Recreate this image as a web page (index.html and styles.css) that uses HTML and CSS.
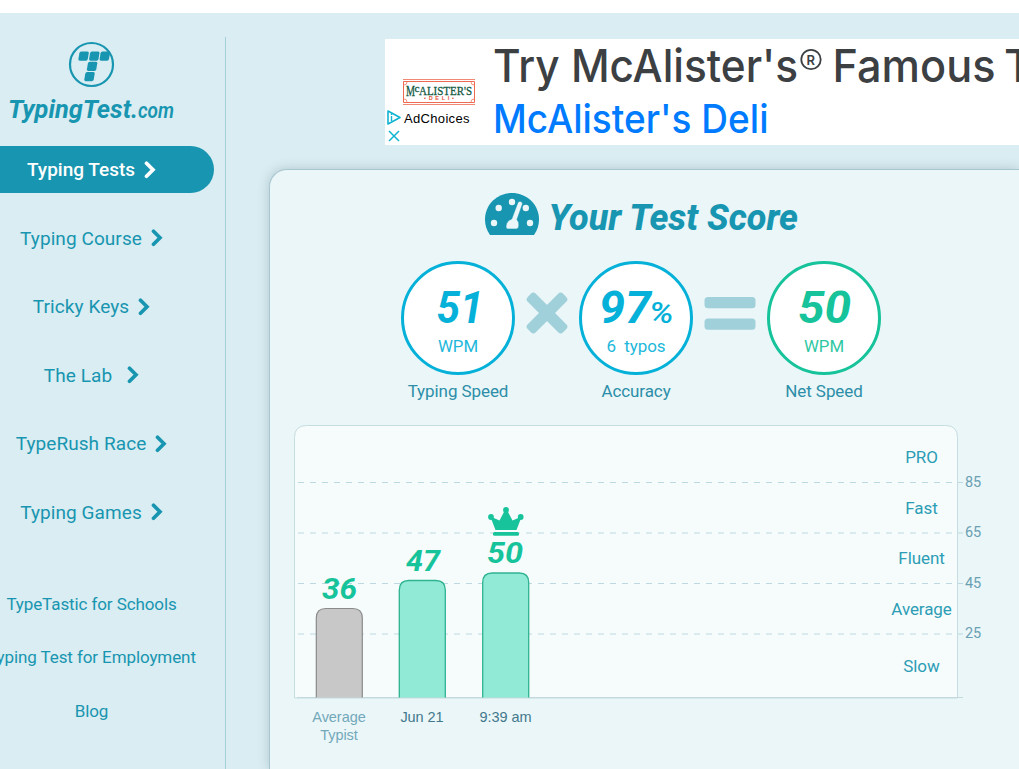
FILE: index.html
```
<!DOCTYPE html>
<html lang="en">
<head>
<meta charset="utf-8">
<title>TypingTest.com</title>
<link rel="stylesheet" href="styles.css">
</head>
<body>
<svg class="defs" width="0" height="0" aria-hidden="true">
  <symbol id="chevron" viewBox="0 0 12 18"><path d="M2.500 2.300 9 8.800l-6.500 6.500" fill="none" stroke="currentColor" stroke-width="3.700" stroke-linecap="round"/></symbol>
</svg>
<div class="page">
  <aside class="sidebar">
    <a class="brand">
      <svg width="183" height="100" viewBox="0 37 183 100">
        <circle cx="91.500" cy="64.500" r="21.500" fill="none" stroke="#1895b0" stroke-width="2.200"/>
        <g fill="#1895b0">
          <path id="key" d="M81.300 51.500h6.200q1.500 0 1.300 1.500l-1 6q-.3 1.700-2 1.700h-6q-1.600 0-1.400-1.700l1-5.800q.3-1.700 1.900-1.700z"/>
          <use href="#key" x="10.700"/><use href="#key" x="21.200"/><use href="#key" x="8.500" y="10.300"/><use href="#key" x="5.900" y="20.600"/>
        </g>
        <text class="brand-name" x="8" y="118" textLength="123" lengthAdjust="spacingAndGlyphs">TypingTest</text>
        <text class="brand-name" x="131" y="118">.</text>
        <text class="brand-tld" x="138" y="118" textLength="36" lengthAdjust="spacingAndGlyphs">com</text>
      </svg>
    </a>
    <nav class="nav">
      <a class="active">Typing Tests<svg><use href="#chevron"/></svg></a>
      <a>Typing Course<svg><use href="#chevron"/></svg></a>
      <a>Tricky Keys<svg><use href="#chevron"/></svg></a>
      <a class="wide">The Lab<svg><use href="#chevron"/></svg></a>
      <a>TypeRush Race<svg><use href="#chevron"/></svg></a>
      <a>Typing Games<svg><use href="#chevron"/></svg></a>
    </nav>
    <div class="links"><a>TypeTastic for Schools</a><a>Typing Test for Employment</a><a>Blog</a></div>
  </aside>
  <main class="main">
    <section class="ad">
      <svg width="634" height="106" viewBox="385 39 634 106">
        <g fill="none" stroke="#ee6a50">
          <path d="M403 79.500h72M403 104.500h72" stroke-width=".8"/>
          <path d="M403.500 81.500h71v21h-71z"/>
          <path d="M407 82q0 3-3 3M471 82q0 3 3 3M407 102q0-3-3-3M471 102q0-3 3-3" stroke-width=".7"/>
        </g>
        <g class="deli">
          <text x="406" y="96" font-size="14" textLength="9" lengthAdjust="spacingAndGlyphs">M</text>
          <text x="414.500" y="92" font-size="11" textLength="5" lengthAdjust="spacingAndGlyphs">c</text>
          <text x="419" y="94.500" font-size="13" textLength="53" lengthAdjust="spacingAndGlyphs">ALISTER'S</text>
        </g>
        <text class="deli-sub" x="424" y="99.500" textLength="30">•DELI•</text>
        <path d="M388 111l12 6.500-12 6.500z" fill="none" stroke="#10b4d2" stroke-width="1.600" stroke-linejoin="round"/>
        <path d="M391.500 113.500v1.500M391.500 116v5" stroke="#10b4d2" stroke-width="1.400"/>
        <path d="M389 131l10 10M399 131l-10 10" stroke="#10b4d2" stroke-width="1.500"/>
        <text class="choices" x="404" y="122.500" textLength="65.500">AdChoices</text>
        <text class="ad-title" x="493" y="82" textLength="305" lengthAdjust="spacingAndGlyphs">Try McAlister's</text>
        <circle cx="811" cy="59.500" r="9.700" fill="none" stroke="#3c4043" stroke-width="1.800"/>
        <text class="reg" x="806.500" y="64.500">R</text>
        <text class="ad-title" x="832.500" y="82" textLength="163" lengthAdjust="spacingAndGlyphs">Famous</text>
        <text class="ad-title" x="1004" y="82">T</text>
        <text class="ad-name" x="493" y="133" textLength="275.500" lengthAdjust="spacingAndGlyphs">McAlister's Deli</text>
      </svg>
    </section>
    <section class="panel">
      <h1 class="title">
        <svg width="320" height="50" viewBox="482 190 320 50">
          <path d="M490 235C482 224 484 209 493 200.500C504 190.500 520 190.500 531 200.500C540 209 542 224 534 235Z" fill="#1895b0"/>
          <g fill="#eaf6f8"><circle cx="494" cy="223" r="3.200"/><circle cx="498.700" cy="208" r="3.200"/><circle cx="512" cy="202" r="3.200"/><circle cx="525.800" cy="208" r="3.200"/><circle cx="530" cy="223" r="3.200"/>
          <path d="M517.700 203q.8-2.200 3-1.500t1.700 2.800L517 219.500q2.500 3 1.800 6.500-.3 3-2.500 3h-8.500q-2 0-1.800-2.500.2-5.500 5.700-7.500z" stroke="#1895b0" stroke-width=".6"/></g>
          <text class="title-text" x="548.500" y="229.500" textLength="249.500" lengthAdjust="spacingAndGlyphs">Your Test Score</text>
        </svg>
      </h1>
      <div class="scores">
        <div class="score">
          <div class="ring"><svg viewBox="0 0 114 114"><text class="num" x="35.500" y="62" textLength="47" lengthAdjust="spacingAndGlyphs">51</text><text class="unit" x="57" y="91" textLength="40" lengthAdjust="spacingAndGlyphs">WPM</text></svg></div>
          <span>Typing Speed</span>
        </div>
        <svg class="op times" viewBox="0 0 40 40"><g fill="#a0d0da"><rect x="-5" y="14.300" width="50" height="11.400" rx="3.500" transform="rotate(45 20 20)"/><rect x="-5" y="14.300" width="50" height="11.400" rx="3.500" transform="rotate(-45 20 20)"/></g></svg>
        <div class="score">
          <div class="ring"><svg viewBox="0 0 114 114"><text class="num" x="20" y="62" textLength="52" lengthAdjust="spacingAndGlyphs">97</text><text class="pct" x="70" y="62" textLength="24.500" lengthAdjust="spacingAndGlyphs">%</text><text class="unit" x="57" y="91" textLength="59" lengthAdjust="spacingAndGlyphs" xml:space="preserve">6  typos</text></svg></div>
          <span>Accuracy</span>
        </div>
        <svg class="op equals" viewBox="0 0 52 34"><rect x=".5" width="51" height="11.300" rx="3.500" fill="#a0d0da"/><rect x=".5" y="21.500" width="51" height="11.300" rx="3.500" fill="#a0d0da"/></svg>
        <div class="score">
          <div class="ring net"><svg viewBox="0 0 114 114"><text class="num" x="31" y="62" textLength="53" lengthAdjust="spacingAndGlyphs">50</text><text class="unit" x="57" y="91" textLength="40" lengthAdjust="spacingAndGlyphs">WPM</text></svg></div>
          <span>Net Speed</span>
        </div>
      </div>
      <svg class="chart" width="706" height="330" viewBox="290 420 706 330">
        <path d="M294.500 698V437.500q0-12 12-12h639q12 0 12 12V698z" fill="#f6fcfc" stroke="#c5dce0"/>
        <path d="M298 482.500h665M298 533h665M298 583.500h665M298 634h665" stroke="#bcd9e2" stroke-width="1.200" stroke-dasharray="6 6"/>
        <path d="M297 697.500h666" stroke="#c3d9dd"/>
        <path d="M316.300 697.500V618q0-9.500 9.500-9.500h27q9.500 0 9.500 9.500v79.500" fill="#c8c8c8" stroke="#8a8a8a" stroke-width="1.200"/>
        <path d="M399.300 697.500V590q0-9.500 9.500-9.500h27q9.500 0 9.500 9.500v107.500" fill="#90ead6" stroke="#2fb391" stroke-width="1.300"/>
        <path d="M482.700 697.500V582.500q0-9.500 9.500-9.500h27q9.500 0 9.500 9.500v115" fill="#90ead6" stroke="#2fb391" stroke-width="1.300"/>
        <g class="bar-value">
          <text x="322" y="599" textLength="35" lengthAdjust="spacingAndGlyphs">36</text>
          <text x="406" y="571" textLength="34" lengthAdjust="spacingAndGlyphs">47</text>
          <text x="487" y="563" textLength="36" lengthAdjust="spacingAndGlyphs">50</text>
        </g>
        <g fill="#16c39a"><path d="M490.300 516.500l9.200 4 5-9.500h3l5 9.500 9.200-4-5.200 13.500h-21z"/><circle cx="506" cy="510" r="2.900"/><circle cx="491" cy="517" r="2.900"/><circle cx="520.700" cy="517" r="2.900"/><rect x="493" y="532" width="26" height="3.800" rx="1.500"/></g>
        <g class="x-label">
          <text class="muted" x="339" y="722">Average</text><text class="muted" x="339" y="740">Typist</text>
          <text x="422" y="722">Jun 21</text><text x="505.500" y="722">9:39 am</text>
        </g>
        <g class="level">
          <text x="921.500" y="463">PRO</text><text x="921.500" y="514">Fast</text><text x="921.500" y="564">Fluent</text><text x="921.500" y="615">Average</text><text x="921.500" y="672">Slow</text>
        </g>
        <g class="tick">
          <text x="965" y="487">85</text><text x="965" y="537">65</text><text x="965" y="588">45</text><text x="965" y="638">25</text>
        </g>
      </svg>
    </section>
  </main>
</div>
</body>
</html>
```

FILE: styles.css
```
* { box-sizing: border-box; }
html, body { margin: 0; height: 100%; overflow: hidden; }
body { padding-top: 13px; background: #fff; font-family: Roboto, sans-serif; color: #1895b0; }
svg { display: block; flex: none; }
.defs { position: absolute; }
.page { display: flex; height: 756px; padding-top: 24px; background: #d9edf2; overflow: hidden; }
.sidebar { flex: none; width: 226px; height: 732px; border-right: 1px solid #a3cfda; }
.brand { display: block; height: 109px; }
.brand-name, .brand-tld, .title-text, .num, .pct, .bar-value { font-family: Roboto, sans-serif; font-style: italic; }
.brand-name { font-size: 25px; font-weight: 700; fill: #1895b0; }
.brand-tld { font-size: 22px; font-weight: 600; fill: #1895b0; }
.nav { width: 245px; margin-left: -31px; display: flex; flex-direction: column; gap: 21.5px; }
.nav a { height: 47px; display: flex; align-items: center; justify-content: center; gap: 9px; font-size: 19px; letter-spacing: .08px; border-radius: 0 24px 24px 0; white-space: nowrap; }
.nav a.active { background: #1895b0; color: #fff; font-weight: 500; letter-spacing: 0; }
.nav a.wide { gap: 15px; }
.nav svg { width: 12px; height: 18px; }
.links { width: 245px; margin: 53.500px 0 0 -31px; display: flex; flex-direction: column; align-items: center; gap: 23.3px; font-size: 17px; }
.links a { height: 30px; line-height: 30px; white-space: nowrap; letter-spacing: -.1px; }
.main { flex: none; width: 793px; padding: 2px 0 0 43px; }
.ad { width: 634px; height: 106px; margin-left: 116px; background: #fff; overflow: hidden; }
.deli { font-family: "Liberation Serif", serif; font-weight: 400; fill: #12583f; stroke: #12583f; stroke-width: .3px; }
.deli-sub { font: 700 5.500px "Liberation Sans", sans-serif; fill: #e5523a; }
.choices { font: 13px "Liberation Sans", sans-serif; fill: #000; }
.ad-title { font: 500 45px Inter, sans-serif; fill: #3c4043; }
.ad-name { font: 500 39px Inter, sans-serif; fill: #007bff; }
.reg { font: 600 13px Inter, sans-serif; fill: #3c4043; }
.panel { width: 750px; height: 600px; margin-top: 24px; padding-top: 20px; border: 1px solid #a8c6cf; border-width: 1px 0 0 1px; border-radius: 18px 0 0 0; background: #eaf6f8; box-shadow: 0 0 12px rgba(50, 80, 90, .24); }
.title { margin: 0 0 0 212px; height: 50px; }
.title-text { font-size: 37px; font-weight: 800; fill: #1895b0; }
.scores { display: flex; align-items: flex-start; margin: 21px 0 0 131px; height: 159px; }
.score { width: 114px; text-align: center; font-size: 17px; letter-spacing: -.08px; color: #2c8ea8; white-space: nowrap; }
.score span { display: block; margin-top: 7px; line-height: 19px; }
.ring { width: 114px; height: 114px; border: 3px solid #05b1d8; border-radius: 50%; background: #fff; color: #05b1d8; }
.ring svg { width: 114px; height: 114px; margin: -3px; }
.net { border-color: #16c39a; color: #16c39a; }
.num { font-size: 43.500px; font-weight: 700; fill: currentColor; }
.pct { font-size: 29px; font-weight: 500; fill: currentColor; }
.unit { font: 17px Roboto, sans-serif; text-anchor: middle; fill: currentColor; opacity: .9; }
.op { margin-top: 32px; }
.times { width: 40px; height: 40px; margin-left: 12px; margin-right: 12px; overflow: visible; }
.equals { width: 52px; height: 34px; margin: 36px 11px 0; }
.chart { margin-left: 20px; }
.bar-value { font-size: 29px; font-weight: 700; fill: #16c39a; }
.x-label { font: 14.500px "Liberation Sans", sans-serif; letter-spacing: -.05px; text-anchor: middle; fill: #43788c; }
.x-label .muted { fill: #72a8ba; }
.level { font: 17px Roboto, sans-serif; letter-spacing: -.1px; text-anchor: middle; fill: #2c9db5; }
.tick { font: 14.500px Roboto, sans-serif; letter-spacing: -.1px; fill: #6ba0b3; }
```
